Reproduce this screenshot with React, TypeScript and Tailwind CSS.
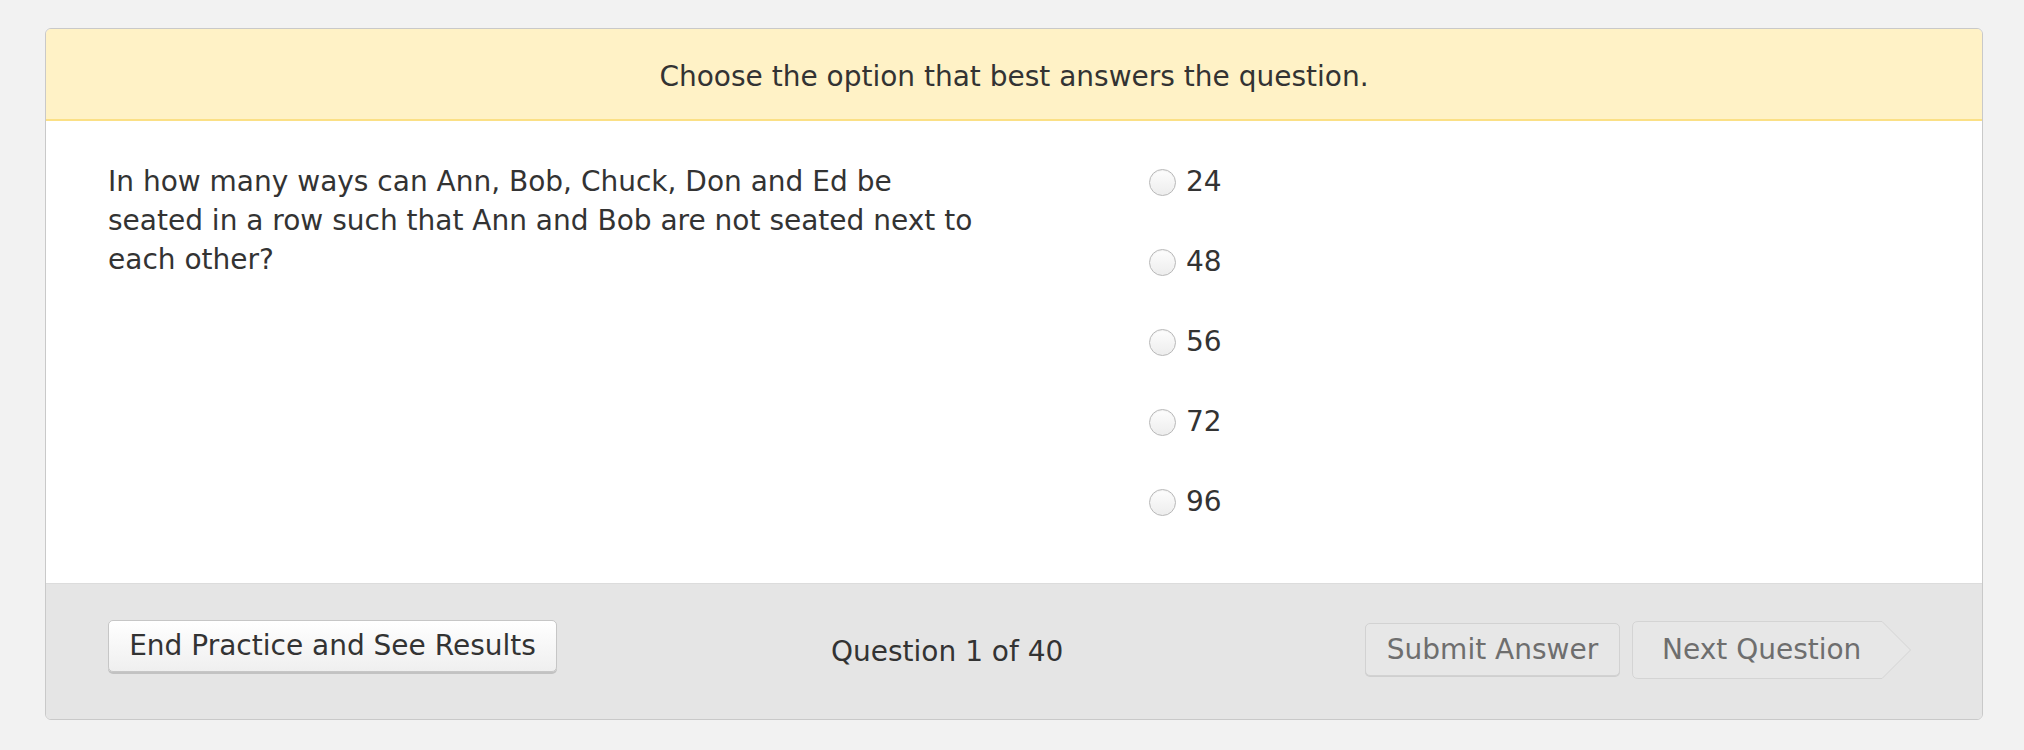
const font = "font-['DejaVu_Sans',Verdana,sans-serif]";

const options = ["24", "48", "56", "72", "96"];

function Radio({ label }: { label: string }) {
  return (
    <label className="flex h-[40px] items-center">
      <span className="h-[27px] w-[27px] rounded-full border border-[#b8b8b8] bg-[linear-gradient(#fdfdfd,#ededed)] shadow-[inset_0_1px_1px_rgba(0,0,0,0.05)]" />
      <span className="ml-[10px] text-[28px] text-[#333]">{label}</span>
    </label>
  );
}

function NextButton() {
  return (
    <div className="relative ml-[12px] flex h-[58px] w-[280px] items-center">
      <svg
        className="absolute inset-0"
        width="280"
        height="58"
        viewBox="0 0 280 58"
        aria-hidden="true"
      >
        <path
          d="M6 0.5H250L278.5 29L250 57.5H6Q0.5 57.5 0.5 52V6Q0.5 0.5 6 0.5Z"
          fill="#e7e7e7"
          stroke="#d4d4d4"
        />
      </svg>
      <span className="relative ml-[30px] text-[28px] text-[#6e6e6e]">Next Question</span>
    </div>
  );
}

export default function App() {
  return (
    <div className={`min-h-screen bg-[#f2f2f2] pt-[28px] pl-[45px] ${font}`}>
      <div className="w-[1938px] overflow-hidden rounded-[6px] border border-[#c9c9c9]">
        <div className="flex h-[92px] items-center justify-center border-b-2 border-[#fbe085] bg-[#fff2c6] pt-[5px] text-[28px] text-[#333]">
          Choose the option that best answers the question.
        </div>
        <div className="flex h-[462px] bg-white pl-[62px] pt-[143px]">
          <p className="-mt-[102px] w-[880px] text-[28px] leading-[39px] text-[#333]">
            In how many ways can Ann, Bob, Chuck, Don and Ed be seated in a row such that Ann and
            Bob are not seated next to each other?
          </p>
          <div className="-mt-[102px] ml-[161px] flex flex-col gap-[40px]">
            {options.map((o) => (
              <Radio key={o} label={o} />
            ))}
          </div>
        </div>
        <div className="flex h-[136px] items-center border-t border-[#dcdcdc] bg-[#e5e5e5] pb-[4px] pl-[62px] pr-[70px]">
          <button className="-mt-[8px] h-[52px] w-[449px] rounded-[5px] border border-[#c6c6c6] bg-[linear-gradient(#ffffff,#efefef)] text-[28px] text-[#333] shadow-[0_2px_0_#c2c2c2]">
            End Practice and See Results
          </button>
          <span className="ml-[274px] mt-[4px] text-[28px] text-[#333]">Question 1 of 40</span>
          <button className="ml-auto h-[53px] w-[255px] rounded-[5px] border border-[#d2d2d2] bg-[#e7e7e7] text-[28px] text-[#6e6e6e] shadow-[0_1px_0_#cfcfcf]">
            Submit Answer
          </button>
          <NextButton />
        </div>
      </div>
    </div>
  );
}
